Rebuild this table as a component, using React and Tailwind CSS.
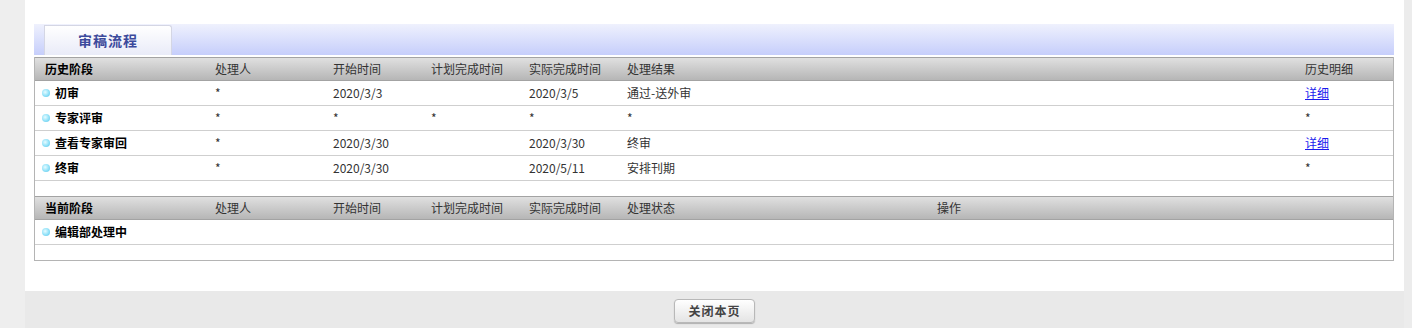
import React from "react";

const histCols = "170px 118px 98px 98px 98px 678px 1fr";
const curCols = "170px 118px 98px 98px 98px 310px 1fr";

const histRows = [
    { stage: "初审", who: "*", start: "2020/3/3", plan: "", done: "2020/3/5", result: "通过-送外审", detail: "link" },
    { stage: "专家评审", who: "*", start: "*", plan: "*", done: "*", result: "*", detail: "*" },
    { stage: "查看专家审回", who: "*", start: "2020/3/30", plan: "", done: "2020/3/30", result: "终审", detail: "link" },
    { stage: "终审", who: "*", start: "2020/3/30", plan: "", done: "2020/5/11", result: "安排刊期", detail: "*" },
];

function Dot() {
    return (
        <span className="inline-block w-[8px] h-[8px] rounded-full bg-[radial-gradient(circle_at_40%_40%,#e8fbff_0%,#9ee6fa_45%,#4fc3ea_100%)] mr-[5px]" />
    );
}

function HeaderRow({ cols, cells }) {
    return (
        <div
            className="grid h-[24px] items-center border-t border-b border-[#a3a3a3] bg-gradient-to-b from-[#e0e0e0] to-[#b6b6b6] text-[12px] text-[#333]"
            style={{ gridTemplateColumns: cols }}
        >
            {cells.map((c, i) => (
                <div key={i} className={`pl-[10px] ${i === 0 ? "font-bold text-black" : ""}`}>{c}</div>
            ))}
        </div>
    );
}

function StageCell({ name }) {
    return (
        <div className="pl-[7px] flex items-center font-bold text-black">
            <Dot />
            {name}
        </div>
    );
}

export default function App() {
    return (
        <div className="flex w-[1412px] h-[328px] bg-[#eeeeee] font-['Noto_Sans_CJK_SC','Noto_Sans',sans-serif] overflow-hidden">
            <div className="w-[25px] shrink-0" />
            <div className="w-[1379px] flex flex-col">
                <div className="h-[291px] bg-white pt-[24px] pl-[9px] pr-[10px]">
                    {/* tab bar */}
                    <div className="h-[31px] mb-[2px] bg-gradient-to-b from-[#eff1fd] to-[#c6cefb] flex items-end pl-[10px]">
                        <div className="w-[128px] h-[30px] border border-b-0 border-[#d4d6e4] rounded-tr-[3px] bg-gradient-to-b from-white to-[#e9ebf8] flex items-center justify-center text-[14px] font-bold text-[#3c4a9c] tracking-[1px]">
                            审稿流程
                        </div>
                    </div>

                    {/* table */}
                    <div className="border-l border-r border-b border-[#b4b4b4] text-[12px] text-[#333]">
                        <HeaderRow cols={histCols} cells={["历史阶段", "处理人", "开始时间", "计划完成时间", "实际完成时间", "处理结果", "历史明细"]} />
                        {histRows.map((r) => (
                            <div key={r.stage} className="grid h-[25px] items-center border-b border-[#cfcfcf]" style={{ gridTemplateColumns: histCols }}>
                                <StageCell name={r.stage} />
                                <div className="pl-[10px]">{r.who}</div>
                                <div className="pl-[10px]">{r.start}</div>
                                <div className="pl-[10px]">{r.plan}</div>
                                <div className="pl-[10px]">{r.done}</div>
                                <div className="pl-[10px]">{r.result}</div>
                                <div className="pl-[10px]">
                                    {r.detail === "link" ? <a href="#" className="text-[#1a1aee] underline">详细</a> : r.detail}
                                </div>
                            </div>
                        ))}
                        <div className="h-[15px]" />
                        <HeaderRow cols={curCols} cells={["当前阶段", "处理人", "开始时间", "计划完成时间", "实际完成时间", "处理状态", "操作"]} />
                        <div className="grid h-[25px] items-center border-b border-[#cfcfcf]" style={{ gridTemplateColumns: curCols }}>
                            <StageCell name="编辑部处理中" />
                        </div>
                        <div className="h-[15px]" />
                    </div>
                </div>
                <div className="flex-1 bg-[#e9e9e9] flex justify-center pt-[8px]">
                    <button className="w-[81px] h-[24px] rounded-[4px] border border-[#b8b8b8] bg-gradient-to-b from-white to-[#e4e4e4] shadow-[0_1px_1px_rgba(0,0,0,0.25)] text-[12px] font-bold text-[#444] tracking-[1px]">
                        关闭本页
                    </button>
                </div>
            </div>
            <div className="w-[8px] shrink-0 bg-[#ececec]" />
        </div>
    );
}
